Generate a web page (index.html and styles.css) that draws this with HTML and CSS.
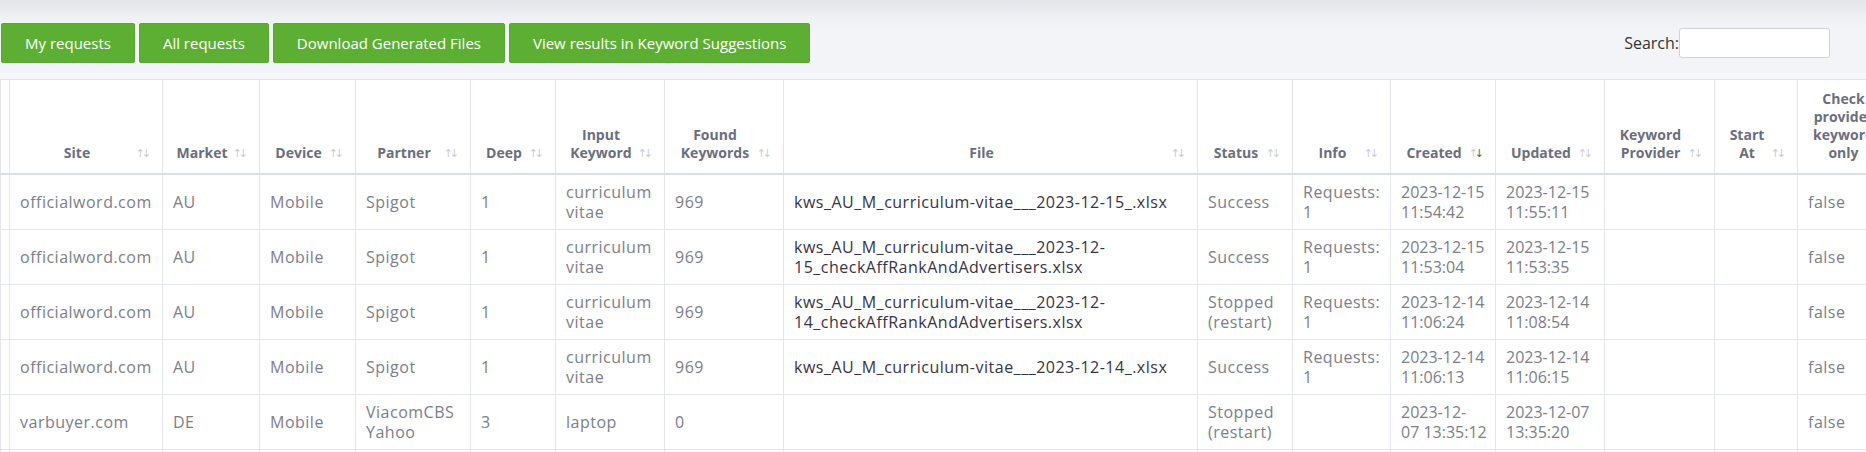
FILE: index.html
```html
<!DOCTYPE html>
<html lang="en">
<head>
<meta charset="utf-8">
<title>Keyword requests</title>
<link rel="stylesheet" href="styles.css">
</head>
<body>
<div class="page">
  <div class="toolbar">
    <div class="actions">
      <button class="btn" type="button">My requests</button>
      <button class="btn" type="button">All requests</button>
      <button class="btn" type="button">Download Generated Files</button>
      <button class="btn" type="button">View results in Keyword Suggestions</button>
    </div>
    <label class="search">Search:<input type="search"></label>
  </div>

  <div class="table-wrap">
    <table class="grid">
      <colgroup>
        <col class="c-stub">
        <col class="c-site">
        <col class="c-market">
        <col class="c-device">
        <col class="c-partner">
        <col class="c-deep">
        <col class="c-input">
        <col class="c-found">
        <col class="c-file">
        <col class="c-status">
        <col class="c-info">
        <col class="c-created">
        <col class="c-updated">
        <col class="c-provider">
        <col class="c-start">
        <col class="c-check">
      </colgroup>
      <thead>
        <tr>
          <th class="stub"></th>
          <th class="sort">Site</th>
          <th class="sort">Market</th>
          <th class="sort">Device</th>
          <th class="sort">Partner</th>
          <th class="sort">Deep</th>
          <th class="sort">Input Keyword</th>
          <th class="sort">Found Keywords</th>
          <th class="sort">File</th>
          <th class="sort">Status</th>
          <th class="sort">Info</th>
          <th class="sort desc">Created</th>
          <th class="sort">Updated</th>
          <th class="sort">Keyword Provider</th>
          <th class="sort">Start At</th>
          <th class="sort">Check provider keyword only</th>
        </tr>
      </thead>
      <tbody>
        <tr>
          <td></td>
          <td>officialword.com</td>
          <td>AU</td>
          <td>Mobile</td>
          <td>Spigot</td>
          <td>1</td>
          <td>curriculum vitae</td>
          <td>969</td>
          <td class="file">kws_AU_M_curriculum-vitae___2023-12-15_.xlsx</td>
          <td>Success</td>
          <td>Requests: 1</td>
          <td class="date">2023-12-15 11:54:42</td>
          <td class="date">2023-12-15 11:55:11</td>
          <td></td>
          <td></td>
          <td>false</td>
        </tr>
        <tr>
          <td></td>
          <td>officialword.com</td>
          <td>AU</td>
          <td>Mobile</td>
          <td>Spigot</td>
          <td>1</td>
          <td>curriculum vitae</td>
          <td>969</td>
          <td class="file">kws_AU_M_curriculum-vitae___2023-12-15_checkAffRankAndAdvertisers.xlsx</td>
          <td>Success</td>
          <td>Requests: 1</td>
          <td class="date">2023-12-15 11:53:04</td>
          <td class="date">2023-12-15 11:53:35</td>
          <td></td>
          <td></td>
          <td>false</td>
        </tr>
        <tr>
          <td></td>
          <td>officialword.com</td>
          <td>AU</td>
          <td>Mobile</td>
          <td>Spigot</td>
          <td>1</td>
          <td>curriculum vitae</td>
          <td>969</td>
          <td class="file">kws_AU_M_curriculum-vitae___2023-12-14_checkAffRankAndAdvertisers.xlsx</td>
          <td>Stopped (restart)</td>
          <td>Requests: 1</td>
          <td class="date">2023-12-14 11:06:24</td>
          <td class="date">2023-12-14 11:08:54</td>
          <td></td>
          <td></td>
          <td>false</td>
        </tr>
        <tr>
          <td></td>
          <td>officialword.com</td>
          <td>AU</td>
          <td>Mobile</td>
          <td>Spigot</td>
          <td>1</td>
          <td>curriculum vitae</td>
          <td>969</td>
          <td class="file">kws_AU_M_curriculum-vitae___2023-12-14_.xlsx</td>
          <td>Success</td>
          <td>Requests: 1</td>
          <td class="date">2023-12-14 11:06:13</td>
          <td class="date">2023-12-14 11:06:15</td>
          <td></td>
          <td></td>
          <td>false</td>
        </tr>
        <tr>
          <td></td>
          <td>varbuyer.com</td>
          <td>DE</td>
          <td>Mobile</td>
          <td>ViacomCBS Yahoo</td>
          <td>3</td>
          <td>laptop</td>
          <td>0</td>
          <td class="file"></td>
          <td>Stopped (restart)</td>
          <td></td>
          <td class="date">2023-12-07&nbsp;13:35:12</td>
          <td class="date">2023-12-07 13:35:20</td>
          <td></td>
          <td></td>
          <td>false</td>
        </tr>
        <tr>
          <td></td><td>&nbsp;</td><td></td><td></td><td></td><td></td><td></td><td></td>
          <td class="file"></td><td></td><td></td><td></td><td></td><td></td><td></td><td></td>
        </tr>
      </tbody>
    </table>
  </div>
</div>
</body>
</html>
```

FILE: styles.css
```css
* {
  box-sizing: border-box;
}

html,
body {
  margin: 0;
}

body {
  width: 1866px;
  height: 452px;
  overflow: hidden;
  background: linear-gradient(#e3e4e9 0, #eef0f4 16px, #f3f4f8 30px) no-repeat, #f3f4f8;
  font-family: "Open Sans", "Noto Sans", sans-serif;
}

/* top bar: action buttons on the left, search on the right */
.toolbar {
  display: flex;
  align-items: center;
  justify-content: space-between;
  padding: 23px 36px 10px 1px;
}

.actions {
  display: flex;
  gap: 4px;
}

.btn {
  height: 40px;
  padding: 0 23px;
  background: #5caf32;
  border: 1px solid #56a82e;
  border-radius: 2px;
  color: #fff;
  font: 15px "Open Sans", sans-serif;
  cursor: pointer;
}

.search {
  display: flex;
  align-items: center;
  font-size: 16px;
  color: #333;
}

.search input {
  width: 151px;
  height: 30px;
  margin: 0;
  border: 1px solid #cfd0dd;
  border-radius: 3px;
  background: #fff;
}

/* requests table */
.table-wrap {
  overflow: hidden;
  padding-top: 6px;
  background: #f6f7fa;
}

.grid {
  table-layout: fixed;
  border-collapse: collapse;
  width: 1907px;
  background: #fff;
  border-top: 1px solid #e0e3eb;
}

.c-stub { width: 9px; }
.c-site { width: 153px; }
.c-market { width: 97px; }
.c-device { width: 96px; }
.c-partner { width: 115px; }
.c-deep { width: 85px; }
.c-input { width: 109px; }
.c-found { width: 119px; }
.c-file { width: 414px; }
.c-status { width: 95px; }
.c-info { width: 98px; }
.c-created { width: 105px; }
.c-updated { width: 109px; }
.c-provider { width: 110px; }
.c-start { width: 83px; }
.c-check { width: 110px; }

.grid th {
  position: relative;
  padding: 10px 28px 11px 10px;
  font: 700 14px/18px "Open Sans", sans-serif;
  color: #6b6e7d;
  text-align: center;
  vertical-align: bottom;
  border-left: 1px solid #e1e4ed;
  border-right: 1px solid #e1e4ed;
  border-bottom: 2px solid #dae0eb;
}

.grid th.stub {
  padding: 0;
}

/* sort arrows */
.grid th.sort::before,
.grid th.sort::after {
  position: absolute;
  bottom: 14px;
  font: 11px/1 "DejaVu Sans", sans-serif;
  color: #c8cbd4;
}

.grid th.sort::before {
  content: "\2191";
  right: 17px;
}

.grid th.sort::after {
  content: "\2193";
  right: 11px;
}

.grid th.sort.desc::after {
  color: #5d606d;
}

.grid td {
  padding: 7px 6px 7px 10px;
  font: 16px/20px "Open Sans", sans-serif;
  letter-spacing: 0.5px;
  color: #7c7e8a;
  border: 1px solid #e4e6ee;
  vertical-align: middle;
}

.grid td.date {
  letter-spacing: 0;
}

.grid td.file {
  color: #383347;
}
```
